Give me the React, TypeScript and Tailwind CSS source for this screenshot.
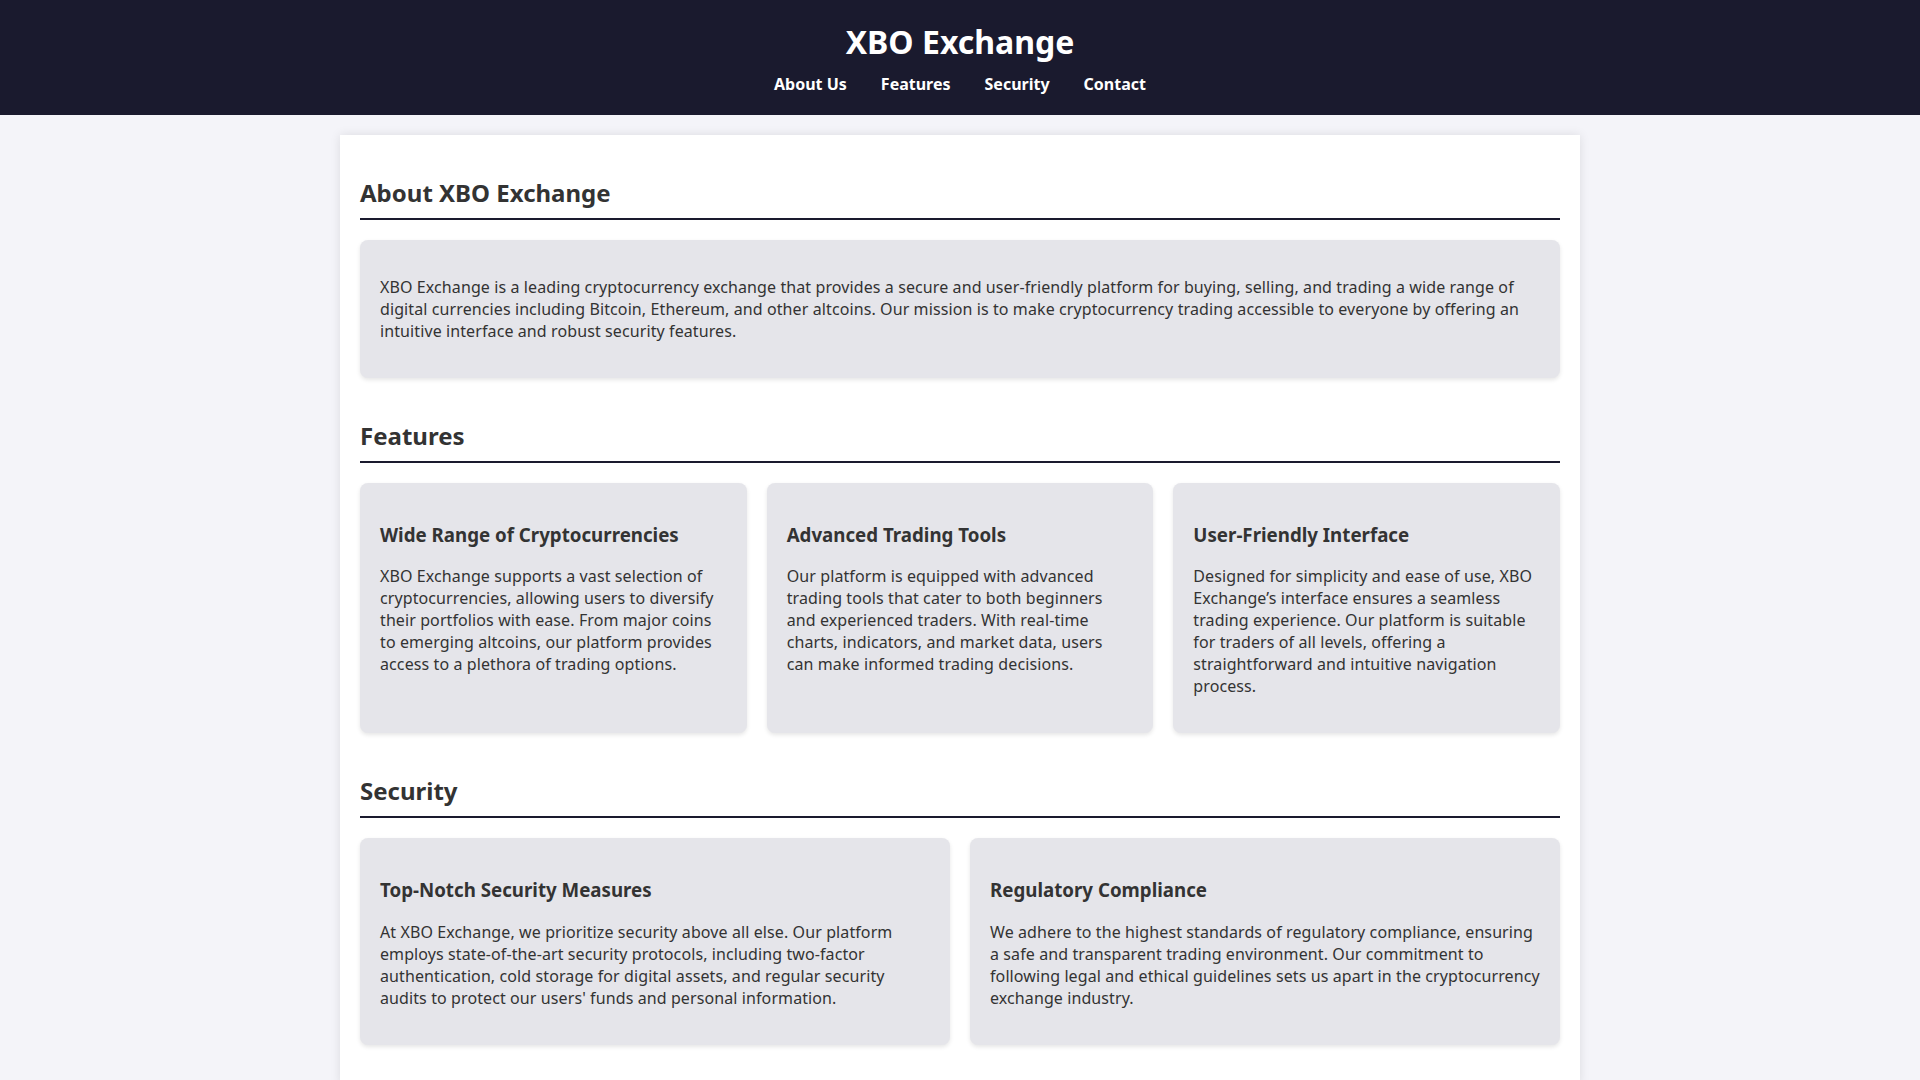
const navLinks = ['About Us', 'Features', 'Security', 'Contact']

const features = [
    {
        title: 'Wide Range of Cryptocurrencies',
        text: 'XBO Exchange supports a vast selection of cryptocurrencies, allowing users to diversify their portfolios with ease. From major coins to emerging altcoins, our platform provides access to a plethora of trading options.',
    },
    {
        title: 'Advanced Trading Tools',
        text: 'Our platform is equipped with advanced trading tools that cater to both beginners and experienced traders. With real-time charts, indicators, and market data, users can make informed trading decisions.',
    },
    {
        title: 'User-Friendly Interface',
        text: 'Designed for simplicity and ease of use, XBO Exchange\u2019s interface ensures a seamless trading experience. Our platform is suitable for traders of all levels, offering a straightforward and intuitive navigation process.',
    },
]

const security = [
    {
        title: 'Top-Notch Security Measures',
        text: "At XBO Exchange, we prioritize security above all else. Our platform employs state-of-the-art security protocols, including two-factor authentication, cold storage for digital assets, and regular security audits to protect our users' funds and personal information.",
    },
    {
        title: 'Regulatory Compliance',
        text: 'We adhere to the highest standards of regulatory compliance, ensuring a safe and transparent trading environment. Our commitment to following legal and ethical guidelines sets us apart in the cryptocurrency exchange industry.',
    },
]

function SectionTitle({children}: {children: React.ReactNode}) {
    return (
        <h2 className="mt-[21px] mb-5 pb-[9px] border-b-2 border-[#1a1a2e] text-[24px] font-bold leading-[normal] text-[#333]">
            {children}
        </h2>
    )
}

function Card({title, text}: {title?: string; text: string}) {
    return (
        <div className="rounded-lg bg-[#e5e5ea] p-5 shadow-[0_2px_4px_rgba(0,0,0,0.1)]">
            {title && (
                <h3 className="mt-[18.72px] mb-[18.72px] text-[18.72px] font-bold leading-[normal] text-[#333]">
                    {title}
                </h3>
            )}
            <p className={`${title ? 'mt-0' : 'mt-4'} mb-4 text-base leading-[normal] tracking-[0.1px] text-[#333]`}>{text}</p>
        </div>
    )
}

export default function App() {
    return (
        <div className="min-h-screen bg-[#f4f4f9] font-['Noto_Sans',sans-serif] text-[#333]">
            <header className="bg-[#1a1a2e] py-5 text-center text-white">
                <h1 className="text-[32px] font-bold leading-[normal]">XBO Exchange</h1>
                <nav className="mt-[10px] flex justify-center gap-[34px] text-base font-bold leading-[normal]">
                    {navLinks.map((l) => (
                        <a key={l} href="#" className="text-white">
                            {l}
                        </a>
                    ))}
                </nav>
            </header>

            <main className="mx-auto mt-5 flex w-[1240px] flex-col bg-white px-5 pt-5 pb-5 shadow-[0_0_10px_rgba(0,0,0,0.1)]">
                <section className="mb-5 flex flex-col">
                    <SectionTitle>About XBO Exchange</SectionTitle>
                    <Card text="XBO Exchange is a leading cryptocurrency exchange that provides a secure and user-friendly platform for buying, selling, and trading a wide range of digital currencies including Bitcoin, Ethereum, and other altcoins. Our mission is to make cryptocurrency trading accessible to everyone by offering an intuitive interface and robust security features." />
                </section>

                <section className="mb-5 flex flex-col">
                    <SectionTitle>Features</SectionTitle>
                    <div className="grid grid-cols-3 gap-5">
                        {features.map((f) => (
                            <Card key={f.title} title={f.title} text={f.text} />
                        ))}
                    </div>
                </section>

                <section className="mb-5 flex flex-col">
                    <SectionTitle>Security</SectionTitle>
                    <div className="grid grid-cols-2 gap-5">
                        {security.map((s) => (
                            <Card key={s.title} title={s.title} text={s.text} />
                        ))}
                    </div>
                </section>
            </main>
        </div>
    )
}
